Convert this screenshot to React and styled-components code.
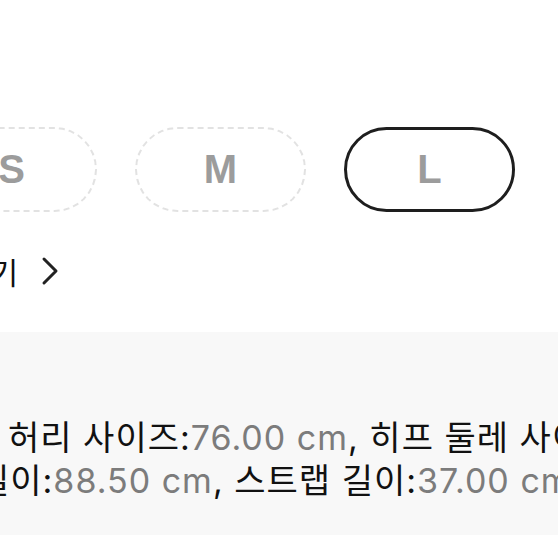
import React from "react";
import styled, { createGlobalStyle } from "styled-components";

const Global = createGlobalStyle`
  html, body { margin: 0; padding: 0; background: #fff; }
  body { width: 558px; height: 558px; overflow: hidden; font-family: Inter, "Noto Sans CJK KR", sans-serif; }
`;

const Page = styled.div`
  width: 558px;
  height: 558px;
  overflow: hidden;
  display: flex;
  flex-direction: column;
  padding-top: 127px;
  box-sizing: border-box;
`;

const SizeRow = styled.div`
  display: flex;
  gap: 38px;
  margin-left: -74px;
`;

const SizeButton = styled.button`
  flex: 0 0 auto;
  width: 171px;
  height: 85px;
  box-sizing: border-box;
  border-radius: 999px;
  background: #fff;
  border: ${(p) => (p.$selected ? "3px solid #1e1e1e" : "2px dashed #e2e2e2")};
  display: flex;
  align-items: center;
  justify-content: center;
  font-family: "Liberation Sans", "Noto Sans CJK KR", sans-serif;
  font-size: 40px;
  font-weight: 700;
  color: #9c9c9c;
  padding: 0;
`;

const LinkRow = styled.div`
  display: flex;
  align-items: center;
  gap: 23px;
  height: 30px;
  margin-top: 44px;
  margin-left: -37px;
  font-family: "Noto Sans CJK KR", sans-serif;
  font-size: 30px;
  color: #111;
  line-height: 30px;
`;

const Chevron = styled.svg`
  width: 18px;
  height: 30px;
  flex: 0 0 auto;
`;

const Panel = styled.div`
  margin-top: 46px;
  height: 203px;
  background: #f8f8f8;
  padding-top: 84px;
  box-sizing: border-box;
  overflow: hidden;
`;

const Line = styled.div`
  white-space: nowrap;
  font-family: Inter, "Noto Sans CJK KR", sans-serif;
  font-size: 34px;
  letter-spacing: 1px;
  line-height: 43px;
  height: 43px;
  color: #111;
  margin-left: ${(p) => p.$indent}px;
`;

const Value = styled.span`
  color: #7c7c7c;
`;

export default function App() {
  return (
    <>
      <Global />
      <Page>
        <SizeRow>
          <SizeButton>S</SizeButton>
          <SizeButton>M</SizeButton>
          <SizeButton $selected>L</SizeButton>
        </SizeRow>
        <LinkRow>
          <span>보기</span>
          <Chevron viewBox="0 0 18 30">
            <path d="M3 3 L15 15 L3 27" fill="none" stroke="#222" strokeWidth="3" strokeLinecap="round" strokeLinejoin="round" />
          </Chevron>
        </LinkRow>
        <Panel>
          <Line $indent={8}>
            허리 사이즈:<Value>76.00 cm</Value>, 히프 둘레 사이즈:<Value>96.00 cm</Value>
          </Line>
          <Line $indent={-22}>
            길이:<Value>88.50 cm</Value>, 스트랩 길이:<Value>37.00 cm</Value>
          </Line>
        </Panel>
      </Page>
    </>
  );
}
